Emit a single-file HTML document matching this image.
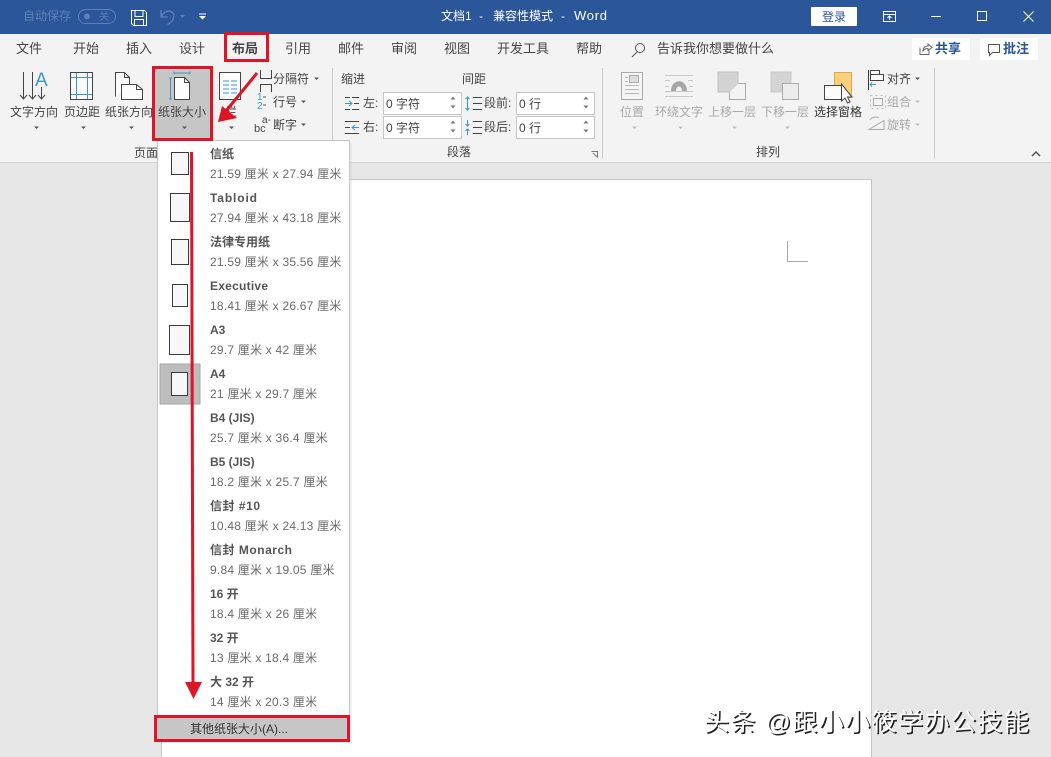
<!DOCTYPE html>
<html lang="zh"><head><meta charset="utf-8"><title>Word</title>
<style>
html,body{margin:0;padding:0;width:1051px;height:757px;overflow:hidden;background:#e6e6e6}
svg{display:block;position:absolute;left:0;top:0}
text{font-family:"Liberation Sans","Noto Sans CJK SC",sans-serif;font-size:12px;fill:#444}
.tab{font-size:13px;fill:#444}
.g{fill:#a8a8a8}
.t{font-weight:700;fill:#555}
.s{fill:#6a6a6a;letter-spacing:.22px}
.wm{font-size:25px}
</style></head><body>
<svg width="1051" height="757" viewBox="0 0 1051 757" xmlns="http://www.w3.org/2000/svg">
<!-- backgrounds -->
<rect width="1051" height="757" fill="#e6e6e6"/>
<rect x="161.500" y="179.500" width="710" height="590" fill="#fff" stroke="#c6c6c6"/>
<path d="M787.500 241V261.500H808" fill="none" stroke="#a8a8a8"/>
<rect y="34" width="1051" height="128" fill="#f3f3f3"/>
<rect y="162" width="1051" height="1" fill="#d2d2d2"/>
<rect width="1051" height="34" fill="#2b579a"/>

<!-- title bar -->
<text x="23" y="20" style="fill:#5d80b6">自动保存</text>
<rect x="78.500" y="9.500" width="37" height="14" rx="7" fill="none" stroke="#5d80b6"/>
<circle cx="87" cy="16.500" r="3" fill="#5d80b6"/>
<text x="99" y="20" style="fill:#5d80b6;font-size:10px">关</text>
<path d="M131.500 10.500h13l2 2v13h-13l-2-2zM135 10.500v6h8v-6M134.500 25.500v-6h9v6" fill="none" stroke="#fff"/>
<path d="M161 10v7h7M161.500 16.500c2-5 8-7 11-4 3 3 1 9-5 12" fill="none" stroke="#5d80b6" stroke-width="1.300"/>
<path d="M180 15h5l-2.500 3z" fill="#5d80b6"/>
<path d="M199 13.500h7v1h-7zM199 16h7l-3.500 3.500z" fill="#fff"/>
<text x="441" y="20" style="fill:#fff">文档1</text>
<text x="479" y="20" style="fill:#fff">-</text>
<text x="493" y="20" style="fill:#fff">兼容性模式</text>
<text x="561" y="20" style="fill:#fff">-</text>
<text x="574" y="20" textLength="33" style="fill:#fff;font-size:13px">Word</text>
<rect x="811" y="7" width="46" height="19" rx="1" fill="#fff"/>
<text x="822" y="21" style="fill:#2b579a">登录</text>
<path d="M883.500 11.500h12v10h-12zM883.500 14.500h12M889.500 20v-4M887.500 18l2-2 2 2" fill="none" stroke="#fff"/>
<rect x="931" y="16" width="10" height="1" fill="#fff"/>
<rect x="977.500" y="11.500" width="9" height="9" fill="none" stroke="#fff"/>
<path d="M1023.500 11.500l10 10M1033.500 11.500l-10 10" stroke="#fff" fill="none"/>

<!-- tabs -->
<g class="tabs">
<text class="tab" x="16" y="53">文件</text>
<text class="tab" x="73" y="53">开始</text>
<text class="tab" x="126" y="53">插入</text>
<text class="tab" x="179" y="53">设计</text>
<text class="tab" x="232" y="53" style="font-weight:700">布局</text>
<text class="tab" x="285" y="53">引用</text>
<text class="tab" x="338" y="53">邮件</text>
<text class="tab" x="391" y="53">审阅</text>
<text class="tab" x="444" y="53">视图</text>
<text class="tab" x="497" y="53">开发工具</text>
<text class="tab" x="576" y="53">帮助</text>
<text class="tab" x="657" y="53">告诉我你想要做什么</text>
</g>
<circle cx="640" cy="48" r="4.500" fill="none" stroke="#555"/>
<path d="M637 52l-5 5" stroke="#555"/>
<rect x="912" y="38" width="58" height="22" rx="2" fill="#fff"/>
<rect x="980" y="38" width="58" height="22" rx="2" fill="#fff"/>
<path d="M920 47.500v7h9v-4M923 51c0-3 2-5 5-5v-2l4 3.500-4 3v-2c-2 0-4 1-5 2.500z" fill="none" stroke="#666"/>
<text x="935" y="53" style="font-size:13px;font-weight:700;fill:#2b579a">共享</text>
<path d="M988.500 44.500h11v8h-7l-3 3v-3h-1z" fill="none" stroke="#555"/>
<text x="1003" y="53" style="font-size:13px;font-weight:700;fill:#2b579a">批注</text>

<!-- highlight -->
<rect x="154" y="68" width="57" height="71" fill="#c6c6c6"/>

<!-- group separators -->
<path d="M332.500 68v90M602.500 68v90M934.500 68v90" stroke="#c8c8c8"/>

<!-- text direction -->
<path d="M23.500 72v27M20 95l3.500 4 3.500-4M32.500 72v27M29 95l3.500 4 3.500-4M41.500 87v12M38 95l3.500 4 3.500-4" fill="none" stroke="#444"/>
<text x="35" y="86" style="font-size:19px;fill:#3f94c8">A</text>
<text x="10" y="116">文字方向</text>
<!-- margins -->
<rect x="70.500" y="72.500" width="22" height="27" fill="#fbfbfb" stroke="#444"/>
<path d="M76.500 73v26M87.500 73v26M71 77.500h21M71 94.500h21" stroke="#3f94c8" fill="none"/>
<text x="64" y="116">页边距</text>
<!-- orientation -->
<path d="M115.500 96.500v-24h9l5 5v8" fill="#fbfbfb" stroke="#444"/>
<path d="M124.500 72.500v5h5" fill="none" stroke="#444"/>
<path d="M121.500 84.500h15l6 5v10h-21z" fill="#fbfbfb" stroke="#444"/>
<path d="M136.500 84.500v5h6" fill="none" stroke="#444"/>
<text x="105" y="116">纸张方向</text>
<!-- size -->
<path d="M174 73h16M174 71.500v3M190 71.500v3M170.500 78v21M169 78h3M169 99h3" stroke="#3f94c8" fill="none"/>
<path d="M174.500 99.500v-22h10l5 5v17z" fill="#fbfbfb" stroke="#444"/>
<path d="M184.500 77.500v5h5" fill="none" stroke="#444"/>
<text x="158" y="116">纸张大小</text>
<!-- columns -->
<rect x="219.500" y="72.500" width="21" height="27" fill="#fbfbfb" stroke="#444"/>
<path d="M223 81h6M231 81h6M223 85h6M231 85h6M223 89h6M231 89h6M223 93h6M231 93h6" stroke="#3f94c8"/>
<text x="225" y="116">栏</text>
<!-- carets -->
<path d="M81 126.500h5l-2.500 2.500zM129 126.500h5l-2.500 2.500zM34 126.500h5l-2.500 2.500zM182 126.500h5l-2.500 2.500zM229 126.500h5l-2.500 2.500z" fill="#555"/>
<path d="M314 77.500h5l-2.500 2.500zM301 100.500h5l-2.500 2.500zM301 123.500h5l-2.500 2.500zM915 77.500h5l-2.500 2.500z" fill="#555"/>
<path d="M915 100.500h5l-2.500 2.500zM915 123.500h5l-2.500 2.500zM632 126.500h5l-2.500 2.500zM678 126.500h5l-2.500 2.500zM732 126.500h5l-2.500 2.500zM785 126.500h5l-2.500 2.500z" fill="#bdbdbd"/>
<!-- breaks etc -->
<path d="M260.500 70v9M271.500 70v9M260 78.500h12M260.500 84v8M271.500 84v8M260 84.500h12" stroke="#444" fill="none"/>
<text x="273" y="83">分隔符</text>
<text x="257" y="100" style="font-size:10px;fill:#3f94c8">1</text>
<text x="257" y="109" style="font-size:10px;fill:#3f94c8">2</text>
<path d="M263 97h3M263 105h3" stroke="#555"/>
<text x="273" y="106">行号</text>
<text x="254" y="132" style="font-size:11px">bc</text>
<text x="262" y="123" style="font-size:10px">a-</text>
<text x="273" y="129">断字</text>
<text x="134" y="157">页面</text>

<!-- paragraph -->
<text x="341" y="83">缩进</text>
<text x="462" y="83">间距</text>
<path d="M345 103.500h7M349 101l3 2.500-3 2.500" stroke="#3f94c8" fill="none"/>
<path d="M352 97.500h7M354 103.500h5M352 109.500h7M345 97.500h5M345 109.500h5" stroke="#444"/>
<text x="363" y="107">左:</text>
<rect x="383.500" y="92.500" width="78" height="22" fill="#fff" stroke="#c6c6c6"/>
<text x="386" y="108">0 字符</text>
<path d="M450.500 99.500h5l-2.500-3zM450.500 105.500h5l-2.500 3z" fill="#777"/>
<path d="M352 127.500h7M350 127.500h-5M345 121.500h14M345 133.500h14" stroke="#444"/>
<path d="M359 127.500h-7M355 125l-3 2.500 3 2.500" stroke="#3f94c8" fill="none"/>
<text x="363" y="131">右:</text>
<rect x="383.500" y="116.500" width="78" height="22" fill="#fff" stroke="#c6c6c6"/>
<text x="386" y="132">0 字符</text>
<path d="M450.500 123.500h5l-2.500-3zM450.500 129.500h5l-2.500 3z" fill="#777"/>
<path d="M467.500 97v7M465.500 99l2-2 2 2M467.500 103v7M465.500 108l2 2 2-2" fill="none" stroke="#3f94c8"/>
<path d="M473 97.500h9M473 103.500h9M473 109.500h9" stroke="#444"/>
<text x="484" y="107">段前:</text>
<rect x="516.500" y="92.500" width="78" height="22" fill="#fff" stroke="#c6c6c6"/>
<text x="519" y="108">0 行</text>
<path d="M583.500 99.500h5l-2.500-3zM583.500 105.500h5l-2.500 3z" fill="#777"/>
<path d="M467.500 120v6M465.500 124l2 2 2-2M467.500 129v6M465.500 131l2-2 2 2" fill="none" stroke="#3f94c8"/>
<path d="M473 121.500h9M473 127.500h9M473 133.500h9" stroke="#444"/>
<text x="484" y="131">段后:</text>
<rect x="516.500" y="116.500" width="78" height="22" fill="#fff" stroke="#c6c6c6"/>
<text x="519" y="132">0 行</text>
<path d="M583.500 123.500h5l-2.500-3zM583.500 129.500h5l-2.500 3z" fill="#777"/>
<text x="447" y="156">段落</text>
<path d="M591.500 151.500h6v6M593 153l4 4" fill="none" stroke="#777"/>

<!-- arrange -->
<rect x="621.500" y="72.500" width="21" height="27" fill="#f5f5f5" stroke="#aaa"/>
<rect x="629.500" y="75.500" width="9" height="7" fill="#ddd" stroke="#aaa"/>
<path d="M625 85.500h14M625 89.500h14M625 93.500h14M625 77.500h3M625 81.500h3" stroke="#bbb"/>
<text class="g" x="620" y="116">位置</text>
<path d="M665 75.500h28M665 80.500h5M688 80.500h5M665 86.500h4M689 86.500h4M665 91.500h28M665 96.500h28" stroke="#c8c8c8"/>
<path d="M671 91c0-13 16-13 16 0h-5c0-6-6-6-6 0z" fill="#a6a6a6"/>
<text class="g" x="655" y="116">环绕文字</text>
<rect x="718" y="72" width="20" height="20" fill="#d3d3d3" stroke="#c0c0c0"/>
<path d="M738.500 83.500h7v16h-16v-7" fill="#f3f3f3" stroke="#aaa"/>
<text class="g" x="708" y="116">上移一层</text>
<rect x="771" y="72" width="20" height="20" fill="#d3d3d3" stroke="#c8c8c8"/>
<rect x="782.500" y="83.500" width="16" height="16" fill="#ececec" stroke="#aaa"/>
<text class="g" x="761" y="116">下移一层</text>
<rect x="834.500" y="72.500" width="17" height="25" fill="#fbcf7c" stroke="#e8a63c"/>
<rect x="824.500" y="85.500" width="17" height="14" fill="#fbfbfb" stroke="#444"/>
<path d="M841.500 84v17l3.500-3 2.500 5 2.500-1-2.500-5h4.500z" fill="#fff" stroke="#444"/>
<text x="814" y="116" style="fill:#333">选择窗格</text>
<path d="M868.500 70v20" stroke="#333"/>
<rect x="870.500" y="70.500" width="9" height="4" fill="#fff" stroke="#444"/>
<rect x="870.500" y="74.500" width="13" height="6" fill="#fff" stroke="#444"/>
<path d="M876 84.500h-6M870 84.500l2-2M870 84.500l2 2" stroke="#3f94c8" fill="none"/>
<text x="887" y="83">对齐</text>
<rect x="870.500" y="95.500" width="15" height="13" fill="none" stroke="#bbb" stroke-dasharray="2 3"/>
<rect x="873.500" y="98.500" width="9" height="7" fill="none" stroke="#aaa"/>
<text class="g" x="887" y="106">组合</text>
<path d="M869 129.500l15-9v9zM870 120c2-3 6-4 9-2" fill="none" stroke="#aaa"/>
<text class="g" x="887" y="129">旋转</text>
<text x="756" y="156">排列</text>
<path d="M1032 156l4-4 4 4" fill="none" stroke="#555" stroke-width="1.500"/>

<!-- dropdown -->
<rect x="159" y="143" width="193" height="600" fill="#d5d5d5" opacity=".35"/>
<rect x="157.500" y="140.500" width="192" height="601" fill="#fff" stroke="#c6c6c6"/>
<rect x="160" y="364" width="40" height="40" fill="#bdbdbd" stroke="#a8a8a8"/>
<g fill="#f7f7f9" stroke="#3a3a3a">
<rect x="171.500" y="152.500" width="17" height="22"/>
<rect x="170.500" y="193.500" width="19" height="28"/>
<rect x="171.500" y="239.500" width="17" height="25"/>
<rect x="172.500" y="284.500" width="15" height="22"/>
<rect x="169.500" y="325.500" width="20" height="29"/>
<rect x="171.500" y="372.500" width="16" height="23"/>
</g>
<text class="t" x="210" y="158">信纸</text><text class="s" x="210" y="178">21.59 厘米 x 27.94 厘米</text>
<text class="t" x="210" y="202" textLength="47">Tabloid</text><text class="s" x="210" y="222">27.94 厘米 x 43.18 厘米</text>
<text class="t" x="210" y="246">法律专用纸</text><text class="s" x="210" y="266">21.59 厘米 x 35.56 厘米</text>
<text class="t" x="210" y="290" textLength="58">Executive</text><text class="s" x="210" y="310">18.41 厘米 x 26.67 厘米</text>
<text class="t" x="210" y="334">A3</text><text class="s" x="210" y="354">29.7 厘米 x 42 厘米</text>
<text class="t" x="210" y="378">A4</text><text class="s" x="210" y="398">21 厘米 x 29.7 厘米</text>
<text class="t" x="210" y="422">B4 (JIS)</text><text class="s" x="210" y="442">25.7 厘米 x 36.4 厘米</text>
<text class="t" x="210" y="466">B5 (JIS)</text><text class="s" x="210" y="486">18.2 厘米 x 25.7 厘米</text>
<text class="t" x="210" y="510" textLength="50">信封 #10</text><text class="s" x="210" y="530">10.48 厘米 x 24.13 厘米</text>
<text class="t" x="210" y="554" textLength="82">信封 Monarch</text><text class="s" x="210" y="574">9.84 厘米 x 19.05 厘米</text>
<text class="t" x="210" y="598">16 开</text><text class="s" x="210" y="618">18.4 厘米 x 26 厘米</text>
<text class="t" x="210" y="642">32 开</text><text class="s" x="210" y="662">13 厘米 x 18.4 厘米</text>
<text class="t" x="210" y="686">大 32 开</text><text class="s" x="210" y="706">14 厘米 x 20.3 厘米</text>
<rect x="156" y="717" width="193" height="24" fill="#c6c6c6"/>
<text x="190" y="733" style="fill:#333">其他纸张大小(A)...</text>

<!-- red annotations -->
<g fill="none" stroke="#dd1526" stroke-width="3">
<rect x="225.500" y="33.500" width="42" height="27"/>
<rect x="153.500" y="67.500" width="58" height="72"/>
<rect x="155.500" y="716.500" width="193" height="24"/>
<path d="M191.500 152L193 684"/>
<path d="M257 73L226 111"/>
</g>
<path d="M185 682h17l-8.500 17z" fill="#dd1526"/>
<path d="M218 122l4-16 15 12z" fill="#dd1526"/>

<!-- watermark -->
<text class="wm" x="705.500" y="732" textLength="325" style="fill:#222">头条 @跟小小筱学办公技能</text>
<text class="wm" x="704" y="730.500" textLength="325" style="fill:#fff">头条 @跟小小筱学办公技能</text>
</svg>
</body></html>
